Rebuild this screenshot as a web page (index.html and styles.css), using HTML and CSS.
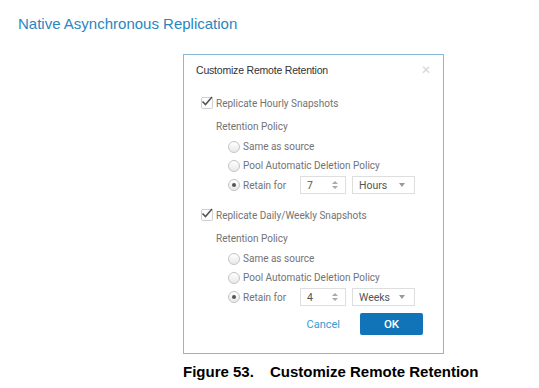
FILE: index.html
```html
<!DOCTYPE html>
<html lang="en">
<head>
    <meta charset="UTF-8" />
    <title>Native Asynchronous Replication</title>
    <link rel="stylesheet" href="styles.css">
</head>
<body>
    <h1 class="section-title">Native Asynchronous Replication</h1>

    <figure class="figure">
        <!-- Dialog screenshot -->
        <div class="dialog">
            <div class="dialog-header">
                <span class="dialog-title">Customize Remote Retention</span>
                <span class="close-btn">&#x2715;</span>
            </div>

            <!-- Hourly group -->
            <div class="check-row">
                <span class="checkbox">
                    <svg width="12" height="12" viewBox="0 0 12 12"><path d="M1.5 6.5 L4.5 9.5 L11 2" fill="none" stroke="#555" stroke-width="1.6"/></svg>
                </span>
                <span>Replicate Hourly Snapshots</span>
            </div>
            <div class="policy-label">Retention Policy</div>
            <div class="radio-row"><span class="radio"></span>Same as source</div>
            <div class="radio-row"><span class="radio"></span>Pool Automatic Deletion Policy</div>
            <div class="radio-row retain">
                <span class="radio checked"></span>
                <span class="retain-label">Retain for</span>
                <div class="spinner">
                    <span>7</span>
                    <span class="spin-arrows"><i class="up"></i><i class="down"></i></span>
                </div>
                <div class="select">
                    <span>Hours</span>
                    <i class="caret"></i>
                </div>
            </div>

            <!-- Daily/weekly group -->
            <div class="check-row second">
                <span class="checkbox">
                    <svg width="12" height="12" viewBox="0 0 12 12"><path d="M1.5 6.5 L4.5 9.5 L11 2" fill="none" stroke="#555" stroke-width="1.6"/></svg>
                </span>
                <span>Replicate Daily/Weekly Snapshots</span>
            </div>
            <div class="policy-label">Retention Policy</div>
            <div class="radio-row"><span class="radio"></span>Same as source</div>
            <div class="radio-row"><span class="radio"></span>Pool Automatic Deletion Policy</div>
            <div class="radio-row retain">
                <span class="radio checked"></span>
                <span class="retain-label">Retain for</span>
                <div class="spinner">
                    <span>4</span>
                    <span class="spin-arrows"><i class="up"></i><i class="down"></i></span>
                </div>
                <div class="select">
                    <span>Weeks</span>
                    <i class="caret"></i>
                </div>
            </div>

            <div class="dialog-footer">
                <span class="cancel-btn">Cancel</span>
                <span class="ok-btn">OK</span>
            </div>
        </div>

        <figcaption class="caption">
            <span class="fig-num">Figure 53.</span>
            <span>Customize Remote Retention</span>
        </figcaption>
    </figure>
</body>
</html>
```

FILE: styles.css
```css
body, html {
    margin: 0;
    padding: 0;
    background: #ffffff;
    font-family: 'Liberation Sans', Arial, sans-serif;
}

.section-title {
    margin: 0;
    padding: 15px 0 0 18px;
    font-size: 15px;
    line-height: 18px;
    font-weight: normal;
    color: #2a86c0;
}

.figure {
    margin: 21px 0 0 183px;
    width: 330px;
}

/* Dialog box */
.dialog {
    width: 259px;
    border: 1px solid #86b9d6;
    padding: 0 0 18px 0;
    font-family: Roboto, 'Noto Sans', sans-serif;
    font-size: 10px;
    color: #737373;
}

.dialog-header {
    height: 30px;
    display: flex;
    align-items: center;
    justify-content: space-between;
    padding: 0 12px;
}

.dialog-title {
    font-family: 'Liberation Sans', Arial, sans-serif;
    font-size: 10.5px;
    color: #333;
    letter-spacing: -0.2px;
}

.close-btn {
    font-size: 12px;
    color: #d6d6d6;
}

.check-row {
    margin-top: 8px;
    height: 20px;
    display: flex;
    align-items: center;
    padding-left: 17px;
    gap: 3px;
}

.check-row.second {
    margin-top: 10px;
}

.checkbox {
    width: 10px;
    height: 10px;
    border: 1px solid #cfcfcf;
    border-radius: 2px;
    position: relative;
}

.checkbox svg {
    position: absolute;
    left: -1px;
    top: -3px;
}

.policy-label {
    margin-top: 4px;
    height: 20px;
    line-height: 20px;
    padding-left: 32px;
}

.radio-row {
    height: 19px;
    display: flex;
    align-items: center;
    padding-left: 44px;
}

.radio-row.retain {
    height: 20px;
}

.radio {
    width: 10px;
    height: 10px;
    border: 1px solid #c4c4c4;
    border-radius: 50%;
    background: linear-gradient(#ffffff, #e8e8e8);
    margin-right: 3px;
    display: flex;
    align-items: center;
    justify-content: center;
}

.radio.checked::after {
    content: "";
    width: 4px;
    height: 4px;
    border-radius: 50%;
    background: #555;
}

.retain-label {
    width: 57px;
}

.spinner {
    width: 46px;
    height: 18px;
    border: 1px solid #dedede;
    display: flex;
    align-items: center;
    justify-content: space-between;
    padding: 0 7px 0 6px;
    box-sizing: border-box;
    color: #555;
    font-size: 10.5px;
}

.spin-arrows {
    display: flex;
    flex-direction: column;
    gap: 2px;
}

.spin-arrows i {
    width: 0;
    height: 0;
    border-left: 3px solid transparent;
    border-right: 3px solid transparent;
}

.spin-arrows .up {
    border-bottom: 3px solid #aaa;
}

.spin-arrows .down {
    border-top: 3px solid #aaa;
}

.select {
    margin-left: 6px;
    width: 63px;
    height: 18px;
    border: 1px solid #dedede;
    box-sizing: border-box;
    display: flex;
    align-items: center;
    justify-content: space-between;
    padding: 0 9px 0 6px;
    color: #555;
    font-size: 10.5px;
}

.caret {
    width: 0;
    height: 0;
    border-left: 3.5px solid transparent;
    border-right: 3.5px solid transparent;
    border-top: 4px solid #999;
}

.dialog-footer {
    margin-top: 6px;
    display: flex;
    justify-content: flex-end;
    align-items: center;
    padding-right: 20px;
}

.cancel-btn {
    color: #3b9bd4;
    font-size: 11px;
    margin-right: 20px;
}

.ok-btn {
    width: 63px;
    height: 22px;
    line-height: 22px;
    text-align: center;
    background: #1274b8;
    color: #fff;
    font-size: 11.5px;
    font-weight: 500;
    border-radius: 2px;
}

/* Figure caption */
.caption {
    margin-top: 10px;
    font-family: 'Liberation Sans', Arial, sans-serif;
    font-weight: bold;
    font-size: 15px;
    line-height: 16px;
    color: #000;
    white-space: nowrap;
}

.fig-num {
    margin-right: 12px;
}
```
